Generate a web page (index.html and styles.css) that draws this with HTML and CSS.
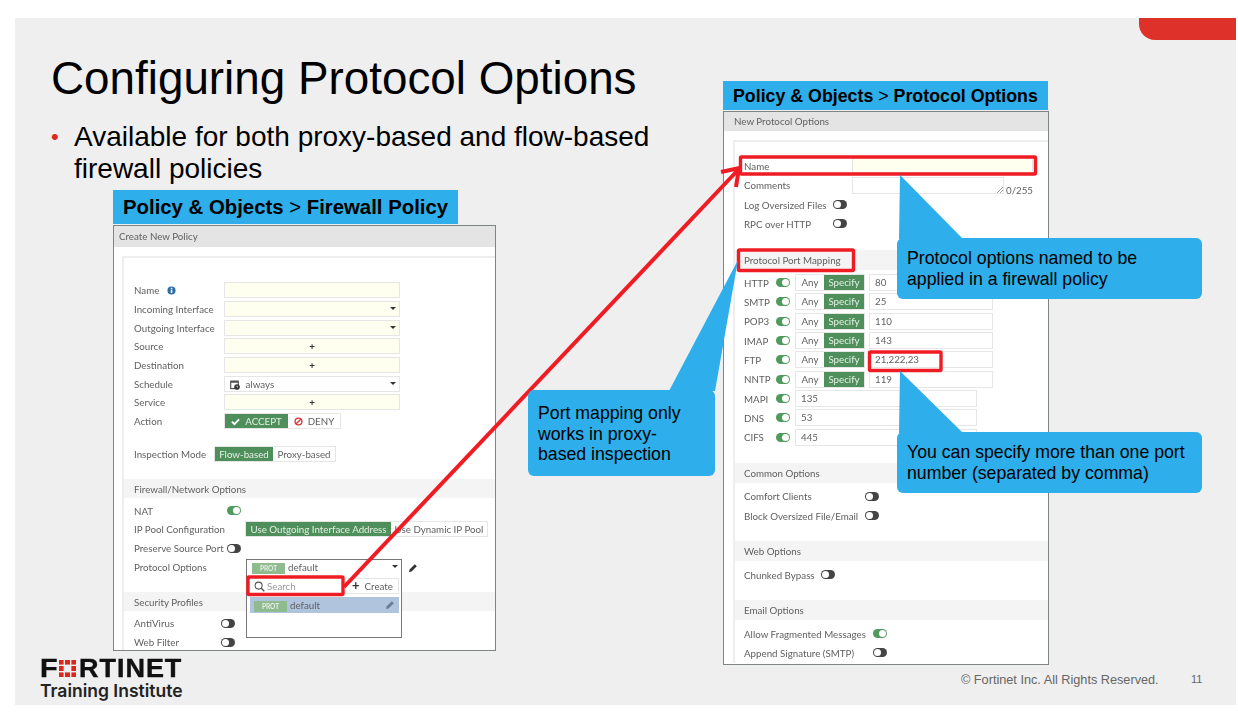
FILE: index.html
```html
<!DOCTYPE html>
<html lang="en">
<head>
    <title>Configuring Protocol Options</title>
    <link rel="stylesheet" href="styles.css">
</head>
<body>
<div class="slide">
    <div class="red-tab"></div>
    <h1 class="title">Configuring Protocol Options</h1>
    <ul class="bullets">
        <li>Available for both proxy-based and flow-based firewall policies</li>
    </ul>

    <div class="path path-left"><b>Policy &amp; Objects</b> &gt; <b>Firewall Policy</b></div>
    <div class="path path-right"><b>Policy &amp; Objects</b> &gt; <b>Protocol Options</b></div>

    <!-- Left window -->
    <div class="window window-left">
        <div class="win-title">Create New Policy</div>
        <div class="card">
            <div class="rows rows-first">
                <div class="row"><span class="lbl w90">Name <svg class="info" viewBox="0 0 10 10"><circle cx="5" cy="5" r="4.5" fill="#2f6ea5"/><rect x="4.2" y="4.2" width="1.7" height="3.6" fill="#fff"/><rect x="4.2" y="2" width="1.7" height="1.5" fill="#fff"/></svg></span><span class="inp yellow"></span></div>
                <div class="row"><span class="lbl w90">Incoming Interface</span><span class="inp yellow"><i class="caret"></i></span></div>
                <div class="row"><span class="lbl w90">Outgoing Interface</span><span class="inp yellow"><i class="caret"></i></span></div>
                <div class="row"><span class="lbl w90">Source</span><span class="inp yellow plus">+</span></div>
                <div class="row"><span class="lbl w90">Destination</span><span class="inp yellow plus">+</span></div>
                <div class="row"><span class="lbl w90">Schedule</span><span class="inp sched">
                    <svg class="cal" viewBox="0 0 10 10"><rect x=".7" y="1.2" width="7.6" height="7.4" fill="none" stroke="#555" stroke-width="1.2"/><rect x=".7" y=".8" width="7.6" height="2" fill="#555"/><circle cx="7" cy="7" r="2.8" fill="#333"/><path d="M7 5.6V7h1" stroke="#fff" stroke-width=".7" fill="none"/></svg>
                    always<i class="caret"></i></span></div>
                <div class="row"><span class="lbl w90">Service</span><span class="inp yellow plus">+</span></div>
                <div class="row"><span class="lbl w90">Action</span>
                    <span class="seg">
                        <span class="opt on act-accept"><svg class="tick" viewBox="0 0 10 10"><path d="M1 5.2l2.8 2.8L9 2.6" fill="none" stroke="#fff" stroke-width="2"/></svg>ACCEPT</span>
                        <span class="opt act-deny"><svg class="tick" viewBox="0 0 10 10"><circle cx="5" cy="5" r="3.8" fill="none" stroke="#d8363a" stroke-width="1.5"/><path d="M2.4 7.6l5.2-5.2" stroke="#d8363a" stroke-width="1.5"/></svg>DENY</span>
                    </span>
                </div>
            </div>
            <div class="row row-mode"><span class="lbl w80">Inspection Mode</span>
                <span class="seg">
                    <span class="opt on mode-flow">Flow-based</span>
                    <span class="opt mode-proxy">Proxy-based</span>
                </span>
            </div>
            <div class="band band-left">Firewall/Network Options</div>
            <div class="rows rows-sec">
                <div class="row"><span class="lbl w93">NAT</span><i class="toggle on"></i></div>
                <div class="row"><span class="lbl w111">IP Pool Configuration</span>
                    <span class="seg">
                        <span class="opt on pool-out">Use Outgoing Interface Address</span>
                        <span class="opt pool-dyn">Use Dynamic IP Pool</span>
                    </span>
                </div>
                <div class="row"><span class="lbl w93">Preserve Source Port</span><i class="toggle"></i></div>
                <div class="row"><span class="lbl w112">Protocol Options</span></div>
            </div>
            <div class="band band-left">Security Profiles</div>
            <div class="rows rows-sec">
                <div class="row"><span class="lbl w87">AntiVirus</span><i class="toggle"></i></div>
                <div class="row"><span class="lbl w87">Web Filter</span><i class="toggle"></i></div>
            </div>
        </div>
    </div>

    <!-- Protocol options dropdown, open over the left window -->
    <div class="dropdown">
        <div class="dd-select"><span class="prot">PROT</span>default<i class="caret"></i></div>
        <div class="dd-panel">
            <div class="dd-tools">
                <span class="dd-search"><svg class="glass" viewBox="0 0 10 10"><circle cx="4.2" cy="4.2" r="3.2" fill="none" stroke="#555" stroke-width="1"/><path d="M6.6 6.6L9.4 9.4" stroke="#555" stroke-width="1.3"/></svg>Search</span>
                <span class="dd-create"><b>+</b>Create</span>
            </div>
            <div class="dd-item"><span class="prot">PROT</span>default
                <svg class="pencil grey" viewBox="0 0 10 10"><path d="M1 9l.6-2.6L6.8 1.2l2 2L3.6 8.4z" fill="currentColor"/></svg>
            </div>
        </div>
    </div>
    <svg class="pencil pencil-out" viewBox="0 0 10 10"><path d="M1 9l.6-2.6L6.8 1.2l2 2L3.6 8.4z" fill="currentColor"/></svg>

    <!-- Right window -->
    <div class="window window-right">
        <div class="win-title win-title-r">New Protocol Options</div>
        <div class="card card-r">
            <div class="rows rows-first-r">
                <div class="row rrow"><span class="lbl w108">Name</span><span class="inp yellow name-inp"></span></div>
                <div class="row rrow"><span class="lbl w108">Comments</span><span class="textarea"><svg class="grip" viewBox="0 0 6 6"><path d="M0 6l6-6M3 6l3-3" stroke="#888" stroke-width=".8"/></svg></span><span class="count">0/255</span></div>
                <div class="row rrow"><span class="lbl w89">Log Oversized Files</span><i class="toggle"></i></div>
                <div class="row rrow"><span class="lbl w89">RPC over HTTP</span><i class="toggle"></i></div>
            </div>
            <div class="band band-right">Protocol Port Mapping</div>
            <div class="rows rows-ports">
                <div class="row rrow"><span class="lbl w32">HTTP</span><i class="toggle on"></i><span class="seg seg-port"><span class="opt any">Any</span><span class="opt on spec">Specify</span></span><span class="inp port">80</span></div>
                <div class="row rrow"><span class="lbl w32">SMTP</span><i class="toggle on"></i><span class="seg seg-port"><span class="opt any">Any</span><span class="opt on spec">Specify</span></span><span class="inp port">25</span></div>
                <div class="row rrow"><span class="lbl w32">POP3</span><i class="toggle on"></i><span class="seg seg-port"><span class="opt any">Any</span><span class="opt on spec">Specify</span></span><span class="inp port">110</span></div>
                <div class="row rrow"><span class="lbl w32">IMAP</span><i class="toggle on"></i><span class="seg seg-port"><span class="opt any">Any</span><span class="opt on spec">Specify</span></span><span class="inp port">143</span></div>
                <div class="row rrow"><span class="lbl w32">FTP</span><i class="toggle on"></i><span class="seg seg-port"><span class="opt any">Any</span><span class="opt on spec">Specify</span></span><span class="inp port">21,222,23</span></div>
                <div class="row rrow"><span class="lbl w32">NNTP</span><i class="toggle on"></i><span class="seg seg-port"><span class="opt any">Any</span><span class="opt on spec">Specify</span></span><span class="inp port">119</span></div>
                <div class="row rrow"><span class="lbl w32">MAPI</span><i class="toggle on"></i><span class="inp port-wide">135</span></div>
                <div class="row rrow"><span class="lbl w32">DNS</span><i class="toggle on"></i><span class="inp port-wide">53</span></div>
                <div class="row rrow"><span class="lbl w32">CIFS</span><i class="toggle on"></i><span class="inp port-wide">445</span></div>
            </div>
            <div class="band band-right">Common Options</div>
            <div class="rows rows-sec-r">
                <div class="row rrow"><span class="lbl w121">Comfort Clients</span><i class="toggle"></i></div>
                <div class="row rrow"><span class="lbl w121">Block Oversized File/Email</span><i class="toggle"></i></div>
            </div>
            <div class="band band-right">Web Options</div>
            <div class="rows rows-sec-r">
                <div class="row rrow"><span class="lbl w77">Chunked Bypass</span><i class="toggle"></i></div>
            </div>
            <div class="band band-right">Email Options</div>
            <div class="rows rows-sec-r">
                <div class="row rrow"><span class="lbl w129">Allow Fragmented Messages</span><i class="toggle on"></i></div>
                <div class="row rrow"><span class="lbl w129">Append Signature (SMTP)</span><i class="toggle"></i></div>
            </div>
        </div>
    </div>

    <!-- Red marks, arrow and callout tails, in page coordinates -->
    <svg class="marks" viewBox="15 18 1221 687">
        <g fill="none" stroke="#f01c24" stroke-width="3.4">
            <rect x="740.5" y="157" width="295" height="17" rx="1"/>
            <rect x="738.5" y="250" width="115" height="20.5" rx="1"/>
            <rect x="869.5" y="352" width="71.5" height="18.5" rx="1"/>
            <rect x="248" y="577" width="95" height="17.5" rx="1"/>
            <path d="M344 587L738 170" stroke-width="4"/>
            <path d="M721 172L739 168L736 187" stroke-width="4"/>
        </g>
        <g fill="#2eaeea">
            <path d="M900 175L963 239H899z"/>
            <path d="M900 371L963 433H899z"/>
            <path d="M738 260L669 391H715z"/>
        </g>
    </svg>

    <div class="callout call-name">Protocol options named to be applied in a firewall policy</div>
    <div class="callout call-port">You can specify more than one port number (separated by comma)</div>
    <div class="callout call-map">Port mapping only works in proxy-based inspection</div>

    <!-- Footer -->
    <div class="logo">
        <div class="wordmark"><span class="wide-f">F</span>
            <svg class="logo-o" viewBox="0 0 17 17">
                <g fill="#da291c">
                    <rect x="0" y="0" width="4.6" height="4.6"/><rect x="6" y="0" width="5" height="4.6"/><rect x="12.4" y="0" width="4.6" height="4.6"/>
                    <rect x="0" y="6" width="4.6" height="5"/><rect x="12.4" y="6" width="4.6" height="5"/>
                    <rect x="0" y="12.4" width="4.6" height="4.6"/><rect x="6" y="12.4" width="5" height="4.6"/><rect x="12.4" y="12.4" width="4.6" height="4.6"/>
                </g>
            </svg>
            <span class="wide-rest">RTINET</span></div>
        <div class="institute">Training Institute</div>
    </div>
    <div class="copyright">© Fortinet Inc. All Rights Reserved.</div>
    <div class="page-no">11</div>
</div>
</body>
</html>
```

FILE: styles.css
```css
body {
    margin: 0;
    background: #fff;
    font-family: "Liberation Sans", Arial, sans-serif;
    overflow: hidden;
}
.slide {
    position: relative;
    width: 1221px;
    height: 687px;
    margin: 18px 0 0 15px;
    background: #efefef;
}
.red-tab {
    position: absolute;
    right: 0;
    top: 0;
    width: 97px;
    height: 22px;
    background: #de3129;
    border-bottom-left-radius: 16px;
}
.title {
    position: absolute;
    left: 36px;
    top: 34px;
    margin: 0;
    font-size: 45.8px;
    line-height: 54px;
    font-weight: 400;
    color: #000;
}
.bullets {
    position: absolute;
    left: 36px;
    top: 103px;
    width: 620px;
    margin: 0;
    padding: 0 0 0 23px;
    list-style: none;
    font-size: 28px;
    line-height: 32px;
    color: #000;
}
.bullets li {
    position: relative;
}
.bullets li::before {
    content: "•";
    position: absolute;
    left: -23px;
    font-size: 22px;
    color: #da291c;
}
.path {
    position: absolute;
    background: #2eaeea;
    color: #000;
    font-size: 20.35px;
    white-space: nowrap;
}
.path-left {
    left: 98px;
    top: 172px;
    width: 335px;
    height: 34px;
    line-height: 34px;
    padding-left: 10px;
}
.path-right {
    left: 708px;
    top: 63px;
    width: 315px;
    height: 29px;
    line-height: 30px;
    padding-left: 10px;
    font-size: 17.8px;
}

/* screenshots */
.window {
    position: absolute;
    box-sizing: border-box;
    background: #fff;
    border: 1.5px solid #7f8582;
    overflow: hidden;
    font-family: Lato, "Liberation Sans", sans-serif;
    font-size: 9.75px;
    color: #5f5f5f;
    filter: blur(0.3px);
}
.window-left {
    left: 98px;
    top: 207px;
    width: 383px;
    height: 426px;
}
.window-right {
    left: 708px;
    top: 93px;
    width: 326px;
    height: 554px;
}
.win-title {
    height: 21px;
    line-height: 21px;
    padding-left: 5px;
    background: #e4e4e4;
}
.win-title-r {
    height: 19px;
    line-height: 19px;
    padding-left: 10px;
}
.card {
    margin: 9px 0 0 8px;
    border-left: 2px solid #eee;
    border-top: 2px solid #eee;
    background: #fff;
}
.card-r {
    margin: 9px 0 0 9px;
}
.rows-first { padding-top: 23px; }
.rows-sec { padding-top: 3px; }
.rows-first-r { padding-top: 14.2px; }
.rows-ports { padding-top: 3.5px; }
.rows-sec-r { padding-top: 3.7px; }
.row {
    display: flex;
    align-items: center;
    height: 18.67px;
    padding-left: 10px;
}
.rrow {
    height: 19.33px;
    padding-left: 9px;
}
.row-mode {
    margin-top: 14.5px;
}
.lbl {
    flex: none;
    white-space: nowrap;
}
.w32 { width: 32px; }
.w77 { width: 77px; }
.w80 { width: 80px; }
.w87 { width: 87px; }
.w89 { width: 89px; }
.w90 { width: 90px; }
.w93 { width: 93px; }
.w108 { width: 108px; }
.w111 { width: 111px; }
.w112 { width: 112px; }
.w121 { width: 121px; }
.w129 { width: 129px; }
.info {
    width: 9px;
    height: 9px;
    margin-left: 5px;
    vertical-align: -1px;
}
.inp {
    position: relative;
    box-sizing: border-box;
    display: block;
    width: 176px;
    height: 16px;
    line-height: 14px;
    border: 1px solid #e6e6e6;
    background: #fff;
}
.yellow {
    background: #fffff0;
}
.plus {
    text-align: center;
    color: #333;
    font-weight: 700;
}
.sched {
    padding-left: 5px;
}
.cal {
    width: 10px;
    height: 10px;
    margin-right: 3px;
    vertical-align: -2px;
}
.caret {
    position: absolute;
    right: 3px;
    top: 5px;
    border: 3px solid transparent;
    border-top: 3px solid #333;
}
.seg {
    display: flex;
    box-sizing: border-box;
    height: 16px;
    line-height: 14px;
    border: 1px solid #e6e6e6;
}
.opt {
    display: block;
    text-align: center;
    white-space: nowrap;
}
.opt.on {
    background: #4f8f5c;
    color: #e4f0e4;
}
.tick {
    width: 9px;
    height: 9px;
    margin-right: 5px;
    vertical-align: -1px;
}
.act-accept { width: 63px; }
.act-deny { width: 52px; }
.mode-flow { width: 58px; }
.mode-proxy { width: 62px; }
.pool-out { width: 145px; }
.pool-dyn { width: 96px; }
.band {
    background: #f4f4f4;
    padding-left: 10px;
}
.band-left {
    margin-top: 16px;
    height: 19px;
    line-height: 20px;
}
.band-right {
    margin-top: 16px;
    height: 20px;
    line-height: 20px;
    padding-left: 9px;
}
.toggle {
    position: relative;
    flex: none;
    display: block;
    width: 14px;
    height: 9px;
    border-radius: 5px;
    background: #444;
}
.toggle::after {
    content: "";
    position: absolute;
    left: 1px;
    top: 1px;
    width: 7px;
    height: 7px;
    border-radius: 50%;
    background: #fff;
}
.toggle.on {
    background: #4f9a5d;
}
.toggle.on::after {
    left: 6px;
}
.seg-port {
    margin-left: 5px;
    height: 17px;
    line-height: 15px;
    width: 70px;
}
.any {
    width: 28px;
}
.spec {
    width: 40px;
}
.port {
    width: 124px;
    height: 17px;
    margin-left: 4px;
    padding-left: 5px;
    line-height: 15px;
}
.port-wide {
    width: 182px;
    height: 17px;
    margin-left: 5px;
    padding-left: 5px;
    line-height: 15px;
}
.name-inp {
    width: 181px;
    height: 15px;
}
.textarea {
    position: relative;
    box-sizing: border-box;
    display: block;
    width: 152px;
    height: 17px;
    border: 1px solid #e6e6e6;
}
.grip {
    position: absolute;
    right: 0;
    bottom: 0;
    width: 6px;
    height: 6px;
}
.count {
    margin: 9px 0 0 2px;
}

/* open dropdown */
.dropdown {
    position: absolute;
    left: 231px;
    top: 541px;
    width: 156px;
    font-family: Lato, "Liberation Sans", sans-serif;
    font-size: 9.75px;
    color: #5f5f5f;
    filter: blur(0.3px);
}
.dd-select {
    position: relative;
    box-sizing: border-box;
    height: 17px;
    line-height: 15px;
    padding-left: 5px;
    background: #fff;
    border: 1px solid #777;
    border-bottom: none;
}
.prot {
    display: inline-block;
    width: 33px;
    height: 11px;
    line-height: 11px;
    margin-right: 3px;
    background: #8fbb8f;
    color: #e6f0e6;
    font-size: 6.5px;
    font-weight: 700;
    text-align: center;
}
.dd-panel {
    box-sizing: border-box;
    height: 62px;
    padding: 2px 2px 0 3px;
    background: #fff;
    border: 1px solid #777;
    border-top: none;
}
.dd-tools {
    display: flex;
    height: 16px;
    line-height: 16px;
}
.dd-search {
    flex: 1;
    padding-left: 4px;
    color: #999;
}
.glass {
    width: 11px;
    height: 11px;
    margin-right: 2px;
    vertical-align: -2px;
}
.dd-create {
    box-sizing: border-box;
    width: 54px;
    padding-left: 6px;
    line-height: 14px;
    border: 1px solid #e6e6e6;
}
.dd-create b {
    margin-right: 5px;
    font-size: 13px;
    line-height: 12px;
    color: #333;
}
.dd-item {
    position: relative;
    height: 16px;
    line-height: 16px;
    margin-top: 3px;
    padding-left: 4px;
    background: #b0c4de;
}
.pencil {
    width: 10px;
    height: 10px;
    color: #333;
}
.grey {
    position: absolute;
    right: 4px;
    top: 3px;
    color: #6b7c90;
}
.pencil-out {
    position: absolute;
    left: 393px;
    top: 545px;
}

/* annotations */
.marks {
    position: absolute;
    left: 0;
    top: 0;
    width: 1221px;
    height: 687px;
}
.callout {
    position: absolute;
    box-sizing: border-box;
    padding: 0 10px;
    display: flex;
    align-items: center;
    background: #2eaeea;
    border-radius: 6px;
    color: #000;
    font-size: 17.7px;
    line-height: 20.5px;
}
.call-name {
    left: 882px;
    top: 220px;
    width: 305px;
    height: 61px;
}
.call-port {
    left: 882px;
    top: 414px;
    width: 305px;
    height: 61px;
}
.call-map {
    left: 513px;
    top: 372px;
    width: 187px;
    height: 86px;
    padding: 2px 14px 0 10px;
}

/* footer */
.logo {
    position: absolute;
    left: 25px;
    top: 641px;
    width: 150px;
}
.wordmark {
    display: flex;
    align-items: center;
    height: 18px;
    font-size: 25px;
    font-weight: 700;
    color: #111;
    -webkit-text-stroke: 0.4px #111;
}
.wide-f {
    width: 19px;
    transform: scaleX(1.15);
    transform-origin: left center;
}
.wide-rest {
    transform: scaleX(1.08);
    transform-origin: left center;
    letter-spacing: 0.9px;
    white-space: nowrap;
}
.logo-o {
    flex: none;
    width: 17px;
    height: 17px;
    margin-right: 3px;
}
.institute {
    margin-top: 3px;
    font-family: Inter, "Liberation Sans", sans-serif;
    font-size: 17.5px;
    line-height: 21px;
    font-weight: 600;
    color: #222;
    white-space: nowrap;
}
.copyright {
    position: absolute;
    left: 946px;
    top: 655px;
    font-size: 12.7px;
    color: #666;
}
.page-no {
    position: absolute;
    left: 1176px;
    top: 655px;
    font-size: 11px;
    color: #666;
}
```
